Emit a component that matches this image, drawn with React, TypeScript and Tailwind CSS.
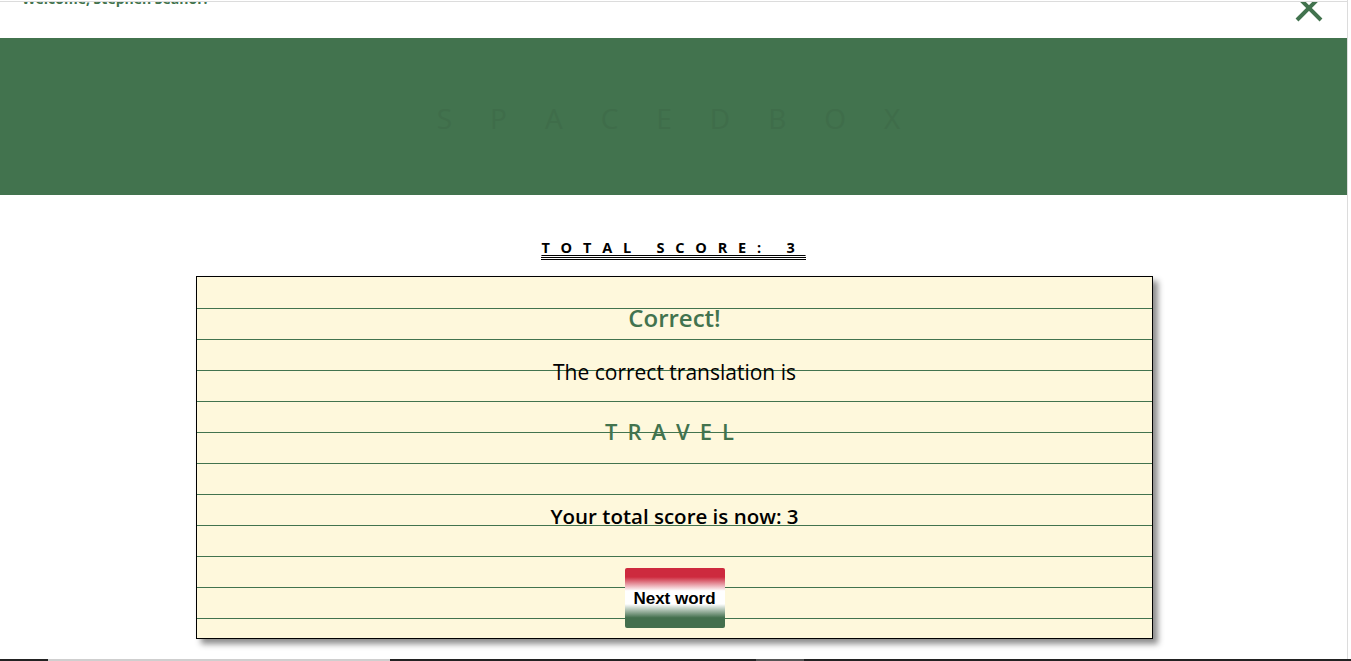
import React from 'react';

const GREEN = '#42734e';

export default function App() {
    const lines = 'repeating-linear-gradient(to bottom, transparent 0px, transparent 30px, #42734e 30px, #42734e 31px)';

    return (
        <div className="w-[1351px] h-[661px] bg-white overflow-hidden flex flex-col" style={{ fontFamily: '"Open Sans", "Noto Sans", sans-serif' }}>
            <div className="w-[1348px] border-r border-[#dcdcdc] flex flex-col flex-1">
                {/* top bar, scrolled partly out of view */}
                <div className="h-[1px] bg-white" />
                <div className="h-[1px] bg-[#dcdcdc]" />
                <div className="h-[36px] overflow-hidden">
                    <div className="-mt-[12px] flex justify-between items-start pl-[22px] pr-[24px]">
                        <span className="text-[14px] font-bold text-[#42734e] leading-[18px]">Welcome, Stephen Seanor!</span>
                        <svg width="28" height="28" viewBox="0 0 28 28" className="mt-[4px]">
                            <path d="M2 2 L26 26 M26 2 L2 26" stroke={GREEN} strokeWidth="4" />
                        </svg>
                    </div>
                </div>

                {/* banner */}
                <div className="h-[157px] bg-[#42734e] flex items-center justify-center">
                    <span className="text-[28px] tracking-[38px] text-[#3f6d4a] pl-[28px] mt-[2px]">SPACEDBOX</span>
                </div>

                {/* score heading */}
                <div className="mt-[43px] flex justify-center">
                    <span className="text-[14.5px] font-bold tracking-[10.8px] leading-[19px] underline underline-offset-[2px] border-b-[3px] border-double border-black text-black">
                        TOTAL SCORE: 3
                    </span>
                </div>

                {/* result card */}
                <div
                    className="mt-[16px] ml-[196px] w-[957px] h-[363px] border border-black bg-[#fef8dc] bg-[position:0_1px] shadow-[5px_5px_6px_rgba(0,0,0,0.45)] flex flex-col items-center"
                    style={{ backgroundImage: lines }}
                >
                    <h2 className="mt-[27px] text-[24px] leading-[28px] font-semibold text-[#42734e]">Correct!</h2>
                    <p className="mt-[28px] text-[21px] leading-[25px] text-black">The correct translation is</p>
                    <p className="mt-[33px] text-[22px] leading-[26px] font-semibold tracking-[10px] text-[#42734e]">TRAVEL</p>
                    <p className="mt-[59px] text-[20.5px] leading-[26px] font-semibold text-black">Your total score is now: 3</p>
                    <button
                        className="mt-[39px] w-[100px] h-[60px] rounded-[2px] text-[17px] font-bold text-black pt-[1px]"
                        style={{
                            fontFamily: '"Liberation Sans", Arial, sans-serif',
                            backgroundImage: 'linear-gradient(to bottom, #cd2a3e 0%, #cd2a3e 15%, #ffffff 38%, #ffffff 60%, #436f4d 83%, #436f4d 100%)',
                        }}
                    >
                        Next word
                    </button>
                </div>

                <div className="flex-1" />
            </div>
            {/* bottom edge strip */}
            <div className="h-[2px] flex">
                <div className="w-[48px] bg-[#222]" />
                <div className="w-[342px] bg-[#cfcfcf]" />
                <div className="w-[366px] bg-[#222]" />
                <div className="w-[48px] bg-[#555]" />
                <div className="flex-1 bg-[#222]" />
            </div>
        </div>
    );
}
